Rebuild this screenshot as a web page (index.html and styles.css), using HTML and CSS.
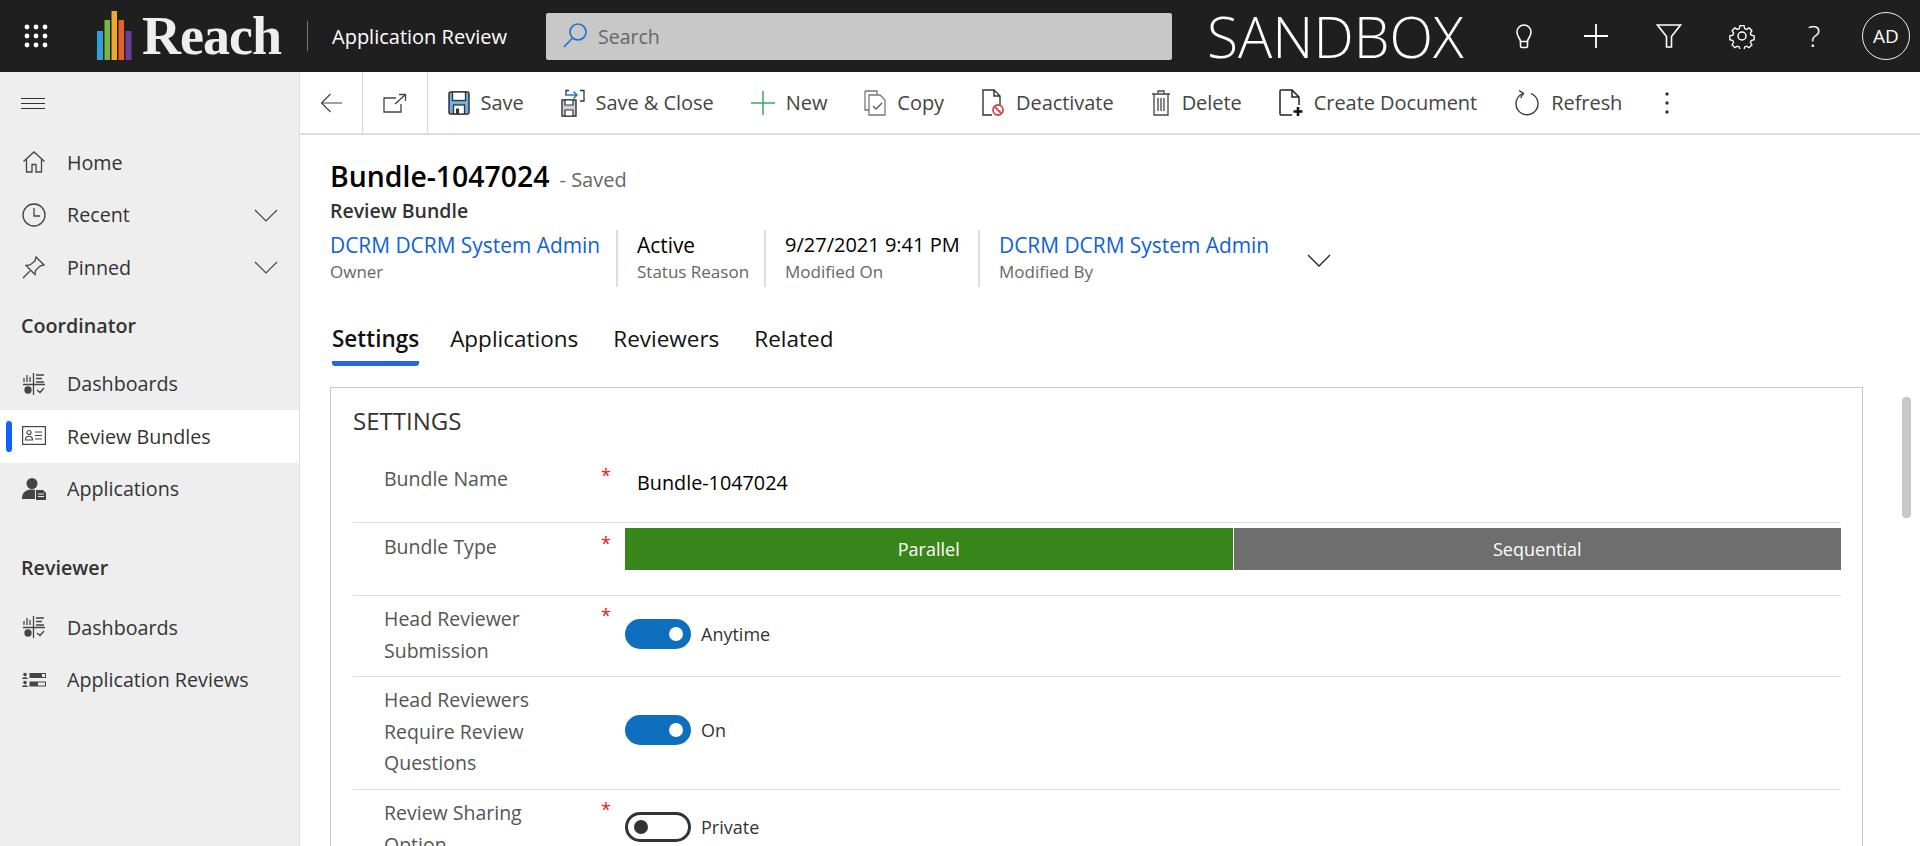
FILE: index.html
```html
<!DOCTYPE html>
<html lang="en">
<head>
  <meta charset="UTF-8">
  <meta name="viewport" content="width=device-width, initial-scale=1.0">
  <title>Application Review</title>
  <link rel="stylesheet" href="styles.css">
</head>
<body>

  <header class="topbar">
    <svg class="waffle" width="24" height="24" viewBox="0 0 24 24" fill="#fff">
      <circle cx="3" cy="3" r="2.4"/><circle cx="12" cy="3" r="2.4"/><circle cx="21" cy="3" r="2.4"/>
      <circle cx="3" cy="12" r="2.4"/><circle cx="12" cy="12" r="2.4"/><circle cx="21" cy="12" r="2.4"/>
      <circle cx="3" cy="21" r="2.4"/><circle cx="12" cy="21" r="2.4"/><circle cx="21" cy="21" r="2.4"/>
    </svg>
    <svg class="logo-bars" width="35" height="49" viewBox="0 0 35 49">
      <rect x="0" y="20" width="6" height="29" fill="#2f9fd8"/>
      <rect x="7.5" y="9" width="5.5" height="40" fill="#7ab441"/>
      <rect x="14.5" y="0" width="5.5" height="49" fill="#f0a92c"/>
      <rect x="21.5" y="9" width="5.5" height="40" fill="#e8602c"/>
      <rect x="28.5" y="20" width="6" height="29" fill="#6b3f98"/>
    </svg>
    <span class="logo-text">Reach</span>
    <span class="top-sep"></span>
    <span class="app-name">Application Review</span>
    <div class="search">
      <svg width="30" height="30" viewBox="0 0 30 30" fill="none" stroke="#1f6fc4" stroke-width="1.6">
        <circle cx="18" cy="11" r="8"/><path d="M12.5 17 4 26"/>
      </svg>
      <span>Search</span>
    </div>
    <span class="env">SANDBOX</span>
    <div class="top-icons">
      <svg width="24" height="26" viewBox="0 0 24 26" fill="none" stroke="#fff" stroke-width="1.6">
        <path d="M8.5 18.5c0-3-3.500-4.500-3.500-9.500a7 7 0 0 1 14 0c0 5-3.500 6.500-3.500 9.500z"/><path d="M8.500 18.500v4.500a1.500 1.500 0 0 0 1.500 1.500h4a1.500 1.500 0 0 0 1.500-1.500v-4.500"/>
      </svg>
      <svg width="26" height="26" viewBox="0 0 26 26" stroke="#fff" stroke-width="1.8"><path d="M13 1v24M1 13h24"/></svg>
      <svg width="26" height="26" viewBox="0 0 26 26" fill="none" stroke="#fff" stroke-width="1.6"><path d="M1.500 2h23L15.500 13.500V24h-5V13.500z"/></svg>
      <svg width="26" height="26" viewBox="0 0 26 26" fill="none" stroke="#fff" stroke-width="1.5">
        <circle cx="13" cy="13" r="4"/>
        <path d="M10.800 1.500h4.400l.8 3.300 2 .9 2.900-1.700 3.100 3.100-1.700 2.900.9 2 3.300.8v4.400l-3.300.8-.9 2 1.700 2.900-3.100 3.100-2.900-1.700-2 .9-.8 3.300h-4.400l-.8-3.300-2-.9-2.900 1.700-3.100-3.100 1.700-2.900-.9-2-3.300-.8v-4.400l3.300-.8.9-2-1.700-2.900 3.100-3.100 2.900 1.700 2-.9z" transform="translate(1.300 1.300) scale(.9)"/>
      </svg>
      <span class="help">?</span>
    </div>
    <span class="avatar">AD</span>
  </header>

  <div class="shell">
    <nav class="sidebar">
      <div class="burger"><span></span><span></span><span></span></div>

      <a class="nav-item">
        <svg class="nav-icon" width="24" height="24" viewBox="0 0 24 24" fill="none" stroke="#444" stroke-width="1.3"><path d="M1.500 11.500 12 2l10.500 9.500M4.500 9.500V22h5.500v-7.500h4V22h5.500V9.500"/></svg>
        Home
      </a>
      <a class="nav-item">
        <svg class="nav-icon" width="24" height="24" viewBox="0 0 24 24" fill="none" stroke="#444" stroke-width="1.3"><circle cx="12" cy="12" r="11"/><path d="M12 5v8h6"/></svg>
        Recent
        <svg class="nav-chevron" width="24" height="13" viewBox="0 0 24 13" fill="none" stroke="#444" stroke-width="1.2"><path d="M1 1l11 11L23 1"/></svg>
      </a>
      <a class="nav-item">
        <svg class="nav-icon" width="24" height="24" viewBox="0 0 24 24" fill="none" stroke="#444" stroke-width="1.3"><path d="M1 23l7-7M14 2l8 8-4 1-4.500 4.500-.5 4-9-9 4-.5L13 6z"/></svg>
        Pinned
        <svg class="nav-chevron" width="24" height="13" viewBox="0 0 24 13" fill="none" stroke="#444" stroke-width="1.2"><path d="M1 1l11 11L23 1"/></svg>
      </a>

      <h3 class="nav-group">Coordinator</h3>
      <a class="nav-item">
        <svg class="nav-icon" width="24" height="24" viewBox="0 0 24 24" fill="none" stroke="#444" stroke-width="1.300"><path d="M11.500 1v22M1 12.500h22M2 10V6M5 10V3M8 10V5M14 3h8M14 6.500h6M14 10h8M15 18l3 2.500 4-4.500"/><circle cx="6" cy="18" r="3" fill="#444"/></svg>
        Dashboards
      </a>
      <a class="nav-item active">
        <svg class="nav-icon" width="24" height="20" viewBox="0 0 24 20" fill="none" stroke="#444" stroke-width="1.200"><rect x=".6" y=".6" width="22.800" height="17.800"/><circle cx="7" cy="6.500" r="2"/><path d="M3.500 14c0-5 7-5 7 0zM13 6h7M13 9.500h7M13 13h7"/></svg>
        Review Bundles
      </a>
      <a class="nav-item">
        <svg class="nav-icon" width="24" height="24" viewBox="0 0 24 24" fill="#444"><circle cx="10" cy="6.500" r="5.500"/><path d="M0 22c0-7 4-9.500 10-9.500 1.500 0 2 .2 3 .5V22z"/><path d="M14 13h7l3 3v7H14z"/><path d="M16 17h6M16 19.500h6" stroke="#eee" stroke-width="1"/></svg>
        Applications
      </a>

      <h3 class="nav-group nav-group-low">Reviewer</h3>
      <a class="nav-item">
        <svg class="nav-icon" width="24" height="24" viewBox="0 0 24 24" fill="none" stroke="#444" stroke-width="1.300"><path d="M11.500 1v22M1 12.500h22M2 10V6M5 10V3M8 10V5M14 3h8M14 6.500h6M14 10h8M15 18l3 2.500 4-4.500"/><circle cx="6" cy="18" r="3" fill="#444"/></svg>
        Dashboards
      </a>
      <a class="nav-item">
        <svg class="nav-icon" width="24" height="16" viewBox="0 0 24 16" fill="#444"><circle cx="3" cy="2.500" r="1.800"/><path d="M0 7c0-2.500 6-2.500 6 0z"/><circle cx="3" cy="10.500" r="1.800"/><path d="M0 15c0-2.500 6-2.500 6 0z"/><rect x="8" y="1.500" width="15.500" height="4" fill="none" stroke="#444"/><rect x="8" y="1.500" width="12" height="4"/><rect x="8" y="10" width="15.500" height="4" fill="none" stroke="#444"/><rect x="8" y="10" width="8" height="4"/></svg>
        Application Reviews
      </a>
    </nav>

    <main class="main">
      <div class="toolbar">
        <button class="tool-cell tool-back">
          <svg width="22" height="20" viewBox="0 0 22 20" fill="none" stroke="#444" stroke-width="1.200"><path d="M10.500 1 1.500 10l9 9M1.500 10H22"/></svg>
        </button>
        <button class="tool-cell tool-open">
          <svg width="24" height="20" viewBox="0 0 24 20" fill="none" stroke="#444" stroke-width="1.300"><path d="M13 5H1v14h17v-8M12 11l10-9M16 1.500h6.500V8"/></svg>
        </button>
        <div class="tool-list">
          <button class="tool">
            <svg width="22" height="24" viewBox="0 0 22 24"><rect x="1" y="1" width="20" height="22" rx="1.500" fill="#6fb0e0" stroke="#333" stroke-width="1.500"/><rect x="4.500" y="1" width="13" height="8.500" fill="#fff" stroke="#333" stroke-width="1.300"/><rect x="5.500" y="14" width="11" height="9" fill="#fff" stroke="#333" stroke-width="1.300"/><rect x="8" y="17.500" width="3" height="5.500" fill="#333"/></svg>
            Save
          </button>
          <button class="tool">
            <svg width="24" height="28" viewBox="0 0 24 28" fill="none"><path d="M1 11h14v16H1z" fill="#cfd4d8" stroke="#333" stroke-width="1.400"/><path d="M4 11h8v5H4zM4 21h8v6H4z" fill="#fff" stroke="#333" stroke-width="1.200"/><path d="M5 7V1.500h3M19 1.500h4V12h-4" stroke="#333" stroke-width="1.300"/><path d="M6 6h10M12.500 2.500 16 6l-3.500 3.500" stroke="#1f78c8" stroke-width="1.500"/></svg>
            Save &amp; Close
          </button>
          <button class="tool">
            <svg width="24" height="24" viewBox="0 0 24 24" stroke="#3ea75f" stroke-width="1.500"><path d="M12 0v24M0 12h24"/></svg>
            New
          </button>
          <button class="tool">
            <svg width="22" height="26" viewBox="0 0 22 26" fill="none" stroke="#777" stroke-width="1.300"><path d="M1 1h12v4M1 1v19h4"/><path d="M5 5h11l5 5v15H5z" fill="#fff"/><path d="M9 16l3 3 6-6" stroke="#555"/></svg>
            Copy
          </button>
          <button class="tool">
            <svg width="24" height="28" viewBox="0 0 24 28" fill="none"><path d="M11 26H2V1h11l6 6v9M13 1v6h6" stroke="#333" stroke-width="1.400"/><circle cx="17" cy="21" r="5" stroke="#d8444f" stroke-width="1.800"/><path d="M13.500 17.500l7 7" stroke="#d8444f" stroke-width="1.800"/></svg>
            Deactivate
          </button>
          <button class="tool">
            <svg width="20" height="26" viewBox="0 0 20 26" fill="none" stroke="#444" stroke-width="1.300"><path d="M1 4h18M7 4V1h6v3M3 4v21h14V4M7 8v13M10 8v13M13 8v13"/></svg>
            Delete
          </button>
          <button class="tool">
            <svg width="24" height="28" viewBox="0 0 24 28" fill="none"><path d="M13 26H2a1 1 0 0 1-1-1V2a1 1 0 0 1 1-1h11l7 7v8M13 1v7h7" stroke="#222" stroke-width="1.500"/><path d="M19 18v9M14.500 22.500h9" stroke="#111" stroke-width="2.600"/></svg>
            Create Document
          </button>
          <button class="tool">
            <svg width="26" height="28" viewBox="0 0 26 28" fill="none" stroke="#333" stroke-width="1.300"><path d="M9 4.500a11 11 0 1 0 8 0"/><path d="M5 1.500l4.500 3-3 4.500"/></svg>
            Refresh
          </button>
          <svg class="tool-more" width="4" height="22" viewBox="0 0 4 22" fill="#333"><circle cx="2" cy="2" r="1.700"/><circle cx="2" cy="11" r="1.700"/><circle cx="2" cy="20" r="1.700"/></svg>
        </div>
      </div>

      <div class="record">
        <div class="record-title"><h1>Bundle-1047024</h1><span class="saved">- Saved</span></div>
        <div class="record-type">Review Bundle</div>

        <div class="meta">
          <div class="meta-item meta-owner"><a>DCRM DCRM System Admin</a><span>Owner</span></div>
          <div class="meta-item meta-status"><b>Active</b><span>Status Reason</span></div>
          <div class="meta-item meta-date"><b>9/27/2021 9:41 PM</b><span>Modified On</span></div>
          <div class="meta-item meta-by"><a>DCRM DCRM System Admin</a><span>Modified By</span></div>
          <svg class="meta-chevron" width="24" height="13" viewBox="0 0 24 13" fill="none" stroke="#222" stroke-width="1.300"><path d="M1 1l11 11L23 1"/></svg>
        </div>

        <div class="tabs">
          <a class="tab tab-on">Settings</a>
          <a class="tab">Applications</a>
          <a class="tab">Reviewers</a>
          <a class="tab">Related</a>
        </div>

        <section class="card">
          <h2>SETTINGS</h2>

          <div class="row row-name">
            <label>Bundle Name</label><i class="req">*</i>
            <div class="value value-name">Bundle-1047024</div>
          </div>
          <div class="row row-type">
            <label>Bundle Type</label><i class="req">*</i>
            <div class="segments">
              <span class="seg seg-on">Parallel</span>
              <span class="seg">Sequential</span>
            </div>
          </div>
          <div class="row row-submit">
            <label>Head Reviewer Submission</label><i class="req">*</i>
            <div class="switch-wrap"><span class="switch on"></span>Anytime</div>
          </div>
          <div class="row row-questions">
            <label>Head Reviewers Require Review Questions</label><i class="req"></i>
            <div class="switch-wrap"><span class="switch on"></span>On</div>
          </div>
          <div class="row row-sharing">
            <label>Review Sharing Option</label><i class="req">*</i>
            <div class="switch-wrap"><span class="switch"></span>Private</div>
          </div>
        </section>
      </div>

      <div class="scroll-thumb"></div>
    </main>
  </div>

</body>
</html>
```

FILE: styles.css
```css
* {
  box-sizing: border-box;
}

html, body {
  height: 100%;
}

body {
  margin: 0;
  overflow: hidden;
  font-family: "Open Sans", "Noto Sans", sans-serif;
  font-size: 18px;
  color: #333;
  background-color: #fff;
}

/* top bar */
.topbar {
  display: flex;
  align-items: center;
  height: 72px;
  background-color: #1f1f1f;
  color: #fff;
}

.waffle {
  margin-left: 24px;
}

.logo-bars {
  margin-left: 49px;
  margin-top: -1px;
}

.logo-text {
  margin-left: 10px;
  width: 138px;
  font-family: "Liberation Serif", serif;
  font-weight: bold;
  font-size: 54px;
  letter-spacing: -1px;
  color: #eee;
  line-height: 72px;
}

.top-sep {
  width: 1px;
  height: 30px;
  margin-left: 27px;
  background-color: #777;
}

.app-name {
  margin-left: 24px;
  width: 214px;
  font-size: 20px;
}

.search {
  display: flex;
  align-items: center;
  gap: 8px;
  width: 626px;
  height: 47px;
  padding-left: 14px;
  background-color: #c8c8c8;
  border-radius: 2px;
  color: #666;
  font-size: 19.5px;
}

.env {
  margin-left: 35px;
  width: 280px;
  font-size: 57px;
  font-weight: 300;
  line-height: 72px;
}

.top-icons {
  display: flex;
  align-items: center;
  gap: 47px;
  margin-left: 25px;
}

.help {
  width: 24px;
  text-align: center;
  font-size: 30px;
  font-weight: 300;
  line-height: 26px;
}

.avatar {
  display: flex;
  align-items: center;
  justify-content: center;
  width: 48px;
  height: 48px;
  margin-left: 36px;
  border: 1px solid #eee;
  border-radius: 50%;
  font-size: 19px;
}

/* page under the bar */
.shell {
  display: flex;
  height: 774px;
}

.sidebar {
  width: 300px;
  flex-shrink: 0;
  padding-top: 26px;
  background-color: #eee;
  border-right: 1px solid #ddd;
}

.burger {
  display: flex;
  flex-direction: column;
  gap: 4px;
  margin-left: 21px;
  margin-bottom: 27px;
}

.burger span {
  display: block;
  width: 24px;
  height: 1px;
  background-color: #333;
}

.nav-item {
  position: relative;
  display: flex;
  align-items: center;
  height: 52.5px;
  padding-left: 67px;
  font-size: 19.7px;
  color: #333;
}

.nav-icon {
  position: absolute;
  left: 22px;
  top: 50%;
  transform: translateY(-50%);
}

.nav-chevron {
  position: absolute;
  left: 254px;
  top: 20px;
}

.nav-item.active {
  background-color: #fff;
}

.nav-item.active::before {
  content: "";
  position: absolute;
  left: 6px;
  top: 11px;
  width: 6px;
  height: 31px;
  border-radius: 3px;
  background-color: #0f62fe;
}

.nav-group {
  height: 32px;
  margin: 16px 0 16px 21px;
  font-size: 19.7px;
  font-weight: 600;
  line-height: 32px;
  color: #333;
}

.nav-group-low {
  margin-top: 37px;
  margin-bottom: 17px;
}

/* right hand side */
.main {
  position: relative;
  flex: 1;
  min-width: 0;
  overflow: hidden;
}

.toolbar {
  display: flex;
  align-items: stretch;
  height: 63px;
  border-bottom: 2px solid #ddd;
}

.tool-cell {
  display: flex;
  align-items: center;
  justify-content: center;
  padding: 0;
  background: none;
  border: 0;
  border-right: 1px solid #d8d8d8;
  font: inherit;
}

.tool-back {
  width: 63px;
}

.tool-open {
  width: 65px;
}

.tool-list {
  display: flex;
  align-items: center;
  padding-left: 1px;
}

.tool {
  display: flex;
  align-items: center;
  gap: 11px;
  padding: 0 18.5px;
  background: none;
  border: 0;
  font: inherit;
  font-size: 20px;
  letter-spacing: -0.05px;
  color: #444;
}

.tool-more {
  margin-left: 24px;
}

.record {
  padding: 21px 0 0 30px;
}

.record-title {
  display: flex;
  align-items: baseline;
  height: 41px;
}

.record-title h1 {
  margin: 0;
  font-size: 28.4px;
  font-weight: 600;
  line-height: 40px;
  color: #000;
}

.saved {
  margin-left: 10px;
  font-size: 20px;
  color: #666;
}

.record-type {
  height: 30px;
  font-size: 19.5px;
  font-weight: 600;
  line-height: 28px;
  color: #333;
}

.meta {
  display: flex;
  align-items: flex-start;
  height: 58px;
  margin-top: 3px;
}

.meta-item {
  display: flex;
  flex-direction: column;
  height: 57px;
  padding-left: 19px;
  border-right: 2px solid #ddd;
}

.meta-item a, .meta-item b {
  font-size: 20.9px;
  line-height: 30px;
  font-weight: 500;
  color: #000;
  white-space: nowrap;
}

.meta-item a {
  color: #1160d8;
}

.meta-date b {
  font-size: 20px;
}

.meta-item span {
  font-size: 17px;
  line-height: 24px;
  color: #666;
}

.meta-owner {
  width: 288px;
  padding-left: 0;
}

.meta-status {
  width: 148px;
}

.meta-date {
  width: 214px;
}

.meta-by {
  width: 318px;
  border-right: 0;
}

.meta-chevron {
  margin-top: 24px;
  margin-left: 9px;
}

.tabs {
  display: flex;
  gap: 35px;
  margin-top: 32px;
  padding-left: 2px;
  height: 67px;
}

.tab {
  height: 46px;
  font-size: 22.5px;
  line-height: 38px;
  color: #111;
}

.tab-on {
  margin-right: -4px;
  font-weight: 600;
  border-bottom: 5px solid #2266e3;
  border-radius: 0 0 3px 3px;
}

.card {
  width: 1533px;
  height: 520px;
  padding: 0 21px 0 22px;
  border: 1px solid #c8c8c8;
}

.card h2 {
  margin: 0;
  height: 68px;
  padding-top: 16px;
  font-size: 24px;
  font-weight: 400;
  line-height: 34px;
  color: #333;
}

.row {
  display: grid;
  grid-template-columns: 248px 24px 1fr;
  padding-top: 7px;
  border-bottom: 1px solid #ddd;
}

.row label {
  padding-left: 31px;
  padding-right: 30px;
  font-size: 19.5px;
  line-height: 31.5px;
  color: #555;
}

.req {
  font-style: normal;
  font-size: 18px;
  line-height: 24px;
  color: #e0212a;
}

.row-name {
  height: 67px;
}

.row-type {
  height: 73px;
  padding-top: 8px;
}

.row-submit {
  height: 81px;
}

.row-questions {
  height: 113px;
}

.row-sharing {
  border-bottom: 0;
}

.value-name {
  margin-left: 12px;
  margin-top: 4px;
  font-size: 19.8px;
  font-weight: 500;
  line-height: 32px;
  color: #000;
}

.segments {
  display: flex;
  gap: 1px;
  height: 42px;
  margin-top: -3px;
}

.seg {
  flex: 1;
  display: flex;
  align-items: center;
  justify-content: center;
  background-color: #6e6e6e;
  color: #fff;
  font-size: 18px;
}

.seg-on {
  background-color: #38861a;
}

.switch-wrap {
  display: flex;
  align-items: center;
  gap: 10px;
  height: 30px;
  font-size: 18px;
  color: #333;
}

.row-submit .switch-wrap {
  margin-top: 16px;
}

.row-sharing .switch-wrap {
  margin-top: 15px;
}

.row-questions .switch-wrap {
  margin-top: 31px;
}

.switch {
  position: relative;
  width: 66px;
  height: 30px;
  border: 3px solid #333;
  border-radius: 15px;
  background-color: #fff;
}

.switch::after {
  content: "";
  position: absolute;
  left: 6px;
  top: 5px;
  width: 14px;
  height: 14px;
  border-radius: 50%;
  background-color: #333;
}

.switch.on {
  border-color: #106ebe;
  background-color: #106ebe;
}

.switch.on::after {
  left: 41px;
  background-color: #fff;
}

.scroll-thumb {
  position: absolute;
  left: 1602px;
  top: 325px;
  width: 9px;
  height: 121px;
  border-radius: 4px;
  background-color: #c8c8c8;
}
```
